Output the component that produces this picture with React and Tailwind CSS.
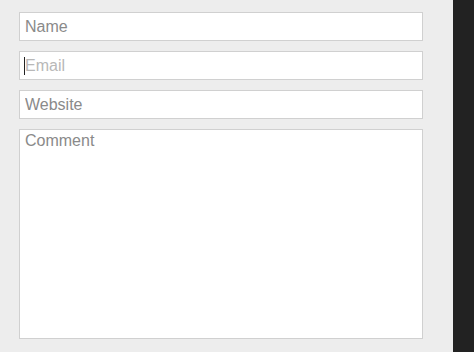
export default function App() {
    return (
        <div className="flex h-[352px] w-[474px] bg-[#222222] font-['Liberation_Sans',Arial,sans-serif]">
            <div className="flex w-[453px] flex-col gap-[10px] bg-[#ededed] pl-[19px] pr-[30px] pt-[12px]">
                <input
                    className="h-[29px] w-full border border-[#d0d0d0] bg-white px-[5px] text-[16px] text-[#555] outline-none placeholder:text-[#8a8a8a]"
                    placeholder="Name"
                />
                <div className="relative">
                    <input
                        className="h-[29px] w-full border border-[#d0d0d0] bg-white px-[5px] text-[16px] text-[#555] outline-none placeholder:text-[#b8b8b8]"
                        placeholder="Email"
                    />
                    <span className="absolute left-[5px] top-[6px] h-[18px] w-px bg-[#222]"/>
                </div>
                <input
                    className="h-[29px] w-full border border-[#d0d0d0] bg-white px-[5px] text-[16px] text-[#555] outline-none placeholder:text-[#8a8a8a]"
                    placeholder="Website"
                />
                <textarea
                    className="h-[210px] w-full resize-none border border-[#d0d0d0] bg-white px-[5px] py-0 text-[16px] leading-[22px] text-[#555] outline-none placeholder:text-[#8a8a8a]"
                    placeholder="Comment"
                />
            </div>
        </div>
    );
}
